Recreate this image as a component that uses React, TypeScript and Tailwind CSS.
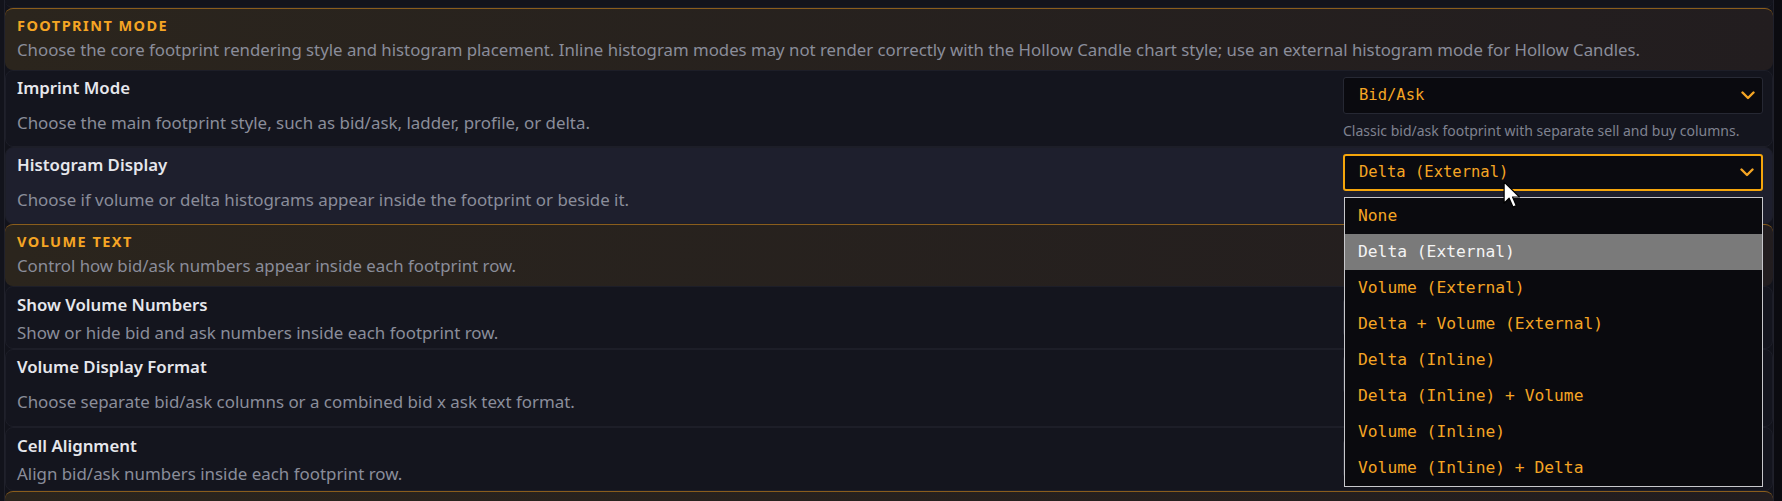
import React from "react";

const SANS = { fontFamily: '"Noto Sans", "Open Sans", sans-serif' };
const MONO = { fontFamily: '"DejaVu Sans Mono", "Liberation Mono", monospace' };

function Chevron() {
  return (
    <svg width="14" height="9" viewBox="0 0 14 9" className="shrink-0">
      <path d="M1.5 1.5 L7 7 L12.5 1.5" fill="none" stroke="#f5a524" strokeWidth="2.4" strokeLinecap="round" strokeLinejoin="round" />
    </svg>
  );
}

function Select({ value, active = false }: { value?: string; active?: boolean }) {
  return (
    <div
      className={
        "flex h-[37px] items-center justify-between rounded-[3px] bg-[#0a0a0f] pr-[7px] " +
        (active ? "border-2 border-[#f5a50b] pl-[14px]" : "border border-[#262833] pl-[15px]")
      }
    >
      <span className="text-[15.5px] leading-none text-[#f5a524]" style={MONO}>
        {value}
      </span>
      <Chevron />
    </div>
  );
}

function SectionHeader({ title, desc }: { title?: string; desc?: string }) {
  return (
    <div className="h-[62px] rounded-lg border-t border-[#8a5d1c] bg-gradient-to-r from-[#2b251d] to-[#221d1f] pl-[12px] pt-[8px]">
      {title && (
        <div className="text-[14.5px] font-bold leading-[16px] tracking-[0.1em] text-[#f5a524]">{title}</div>
      )}
      {desc && <div className="mt-[6px] whitespace-nowrap text-[16.8px] leading-[22px] text-[#8a8d9a]">{desc}</div>}
    </div>
  );
}

function ControlRow({
  title,
  desc,
  value,
  hint,
  active = false,
  hover = false,
  height = "h-[77px]",
  children,
}: {
  title: string;
  desc: string;
  value?: string;
  hint?: string;
  active?: boolean;
  hover?: boolean;
  height?: string;
  children?: React.ReactNode;
}) {
  return (
    <div
      className={
        "flex rounded-lg border border-[#1d1e28] pl-[11px] pr-[9px] pt-[6px] " +
        height +
        " " +
        (hover ? "bg-[#1e1f2d]" : "bg-[#14151e]")
      }
    >
      <div className="flex-1">
        <div className="text-[16.8px] font-semibold leading-[22px] text-[#e6e7ec]">{title}</div>
        <div className="mt-[12px] whitespace-nowrap text-[16.9px] leading-[24px] text-[#8a8d9a]">{desc}</div>
      </div>
      <div className="relative w-[420px]">
        <Select value={value} active={active} />
        {hint && <div className="mt-[8px] text-[14px] leading-[18px] text-[#7f8290]">{hint}</div>}
        {children}
      </div>
    </div>
  );
}

function PlainRow({
  title,
  desc,
  height = "h-[63px]",
}: {
  title: string;
  desc: string;
  height?: string;
}) {
  return (
    <div className={"flex rounded-lg border border-[#1d1e28] bg-[#14151e] pl-[11px] pr-[9px] pt-[7px] " + height}>
      <div className="flex-1">
        <div className="text-[16.8px] font-semibold leading-[22px] text-[#e6e7ec]">{title}</div>
        <div className="mt-[5px] whitespace-nowrap text-[16.9px] leading-[24px] text-[#8a8d9a]">{desc}</div>
      </div>
      <div className="w-[420px] pt-[5px]">
        <Select />
      </div>
    </div>
  );
}

const OPTIONS = [
  "None",
  "Delta (External)",
  "Volume (External)",
  "Delta + Volume (External)",
  "Delta (Inline)",
  "Delta (Inline) + Volume",
  "Volume (Inline)",
  "Volume (Inline) + Delta",
];

function Dropdown() {
  return (
    <div className="absolute left-[1px] top-[43px] z-10 w-[419px] border border-[#c8c8cc] bg-[#0a0a0e]">
      {OPTIONS.map((o) => {
        const sel = o === "Delta (External)";
        return (
          <div
            key={o}
            className={
              "flex h-[36px] items-center pl-[13px] text-[16.3px] leading-none " +
              (sel ? "bg-[#7a7a7a] text-[#f4f4f4]" : "text-[#f5a524]")
            }
            style={MONO}
          >
            {o}
          </div>
        );
      })}
    </div>
  );
}

function Cursor() {
  return (
    <svg
      className="pointer-events-none absolute left-[160px] top-[27px] z-20"
      width="20"
      height="30"
      viewBox="0 0 18 27"
    >
      <path
        d="M1 1 L1 20 L5.5 15.5 L9 23.5 L12 22.2 L8.6 14.4 L14.8 14.4 Z"
        fill="#ffffff"
        stroke="#000000"
        strokeWidth="1.1"
        strokeLinejoin="round"
      />
    </svg>
  );
}

export default function App() {
  return (
    <div className="flex h-[501px] w-full overflow-hidden bg-[#12131b]" style={SANS}>
      <div className="ml-[4px] flex-1 border-x border-[#20212b]">
        <div className="h-[8px] rounded-b-lg border-b border-[#1d1e28] bg-[#13141c]" />
        <SectionHeader
          title="FOOTPRINT MODE"
          desc="Choose the core footprint rendering style and histogram placement. Inline histogram modes may not render correctly with the Hollow Candle chart style; use an external histogram mode for Hollow Candles."
        />
        <ControlRow
          title="Imprint Mode"
          desc="Choose the main footprint style, such as bid/ask, ladder, profile, or delta."
          value="Bid/Ask"
          hint="Classic bid/ask footprint with separate sell and buy columns."
        />
        <ControlRow
          title="Histogram Display"
          desc="Choose if volume or delta histograms appear inside the footprint or beside it."
          value="Delta (External)"
          active
          hover
        >
          <Dropdown />
          <Cursor />
        </ControlRow>
        <SectionHeader title="VOLUME TEXT" desc="Control how bid/ask numbers appear inside each footprint row." />
        <PlainRow title="Show Volume Numbers" desc="Show or hide bid and ask numbers inside each footprint row." />
        <ControlRow
          title="Volume Display Format"
          desc="Choose separate bid/ask columns or a combined bid x ask text format."
          height="h-[78px]"
        />
        <PlainRow title="Cell Alignment" desc="Align bid/ask numbers inside each footprint row." height="h-[64px]" />
        <SectionHeader />
      </div>
      <div className="w-[8px] bg-[#0b0b10]" />
    </div>
  );
}
